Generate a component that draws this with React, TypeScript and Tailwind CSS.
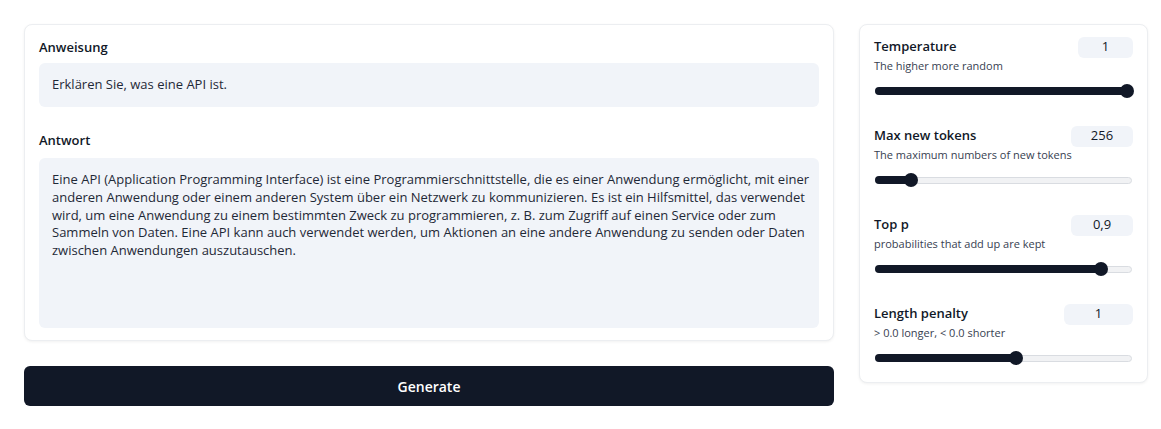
import React from "react";

const font = { fontFamily: '"Open Sans", "Noto Sans", sans-serif' };

function Slider({ pct }: { pct: number }) {
  return (
    <div className="relative h-4 mt-[10px] mx-[1px]">
      <div className="absolute left-0 right-0 top-[5px] h-[7px] rounded-full bg-[#f1f2f4] border border-[#d9dce1]" />
      <div
        className="absolute left-0 top-[4px] h-[8px] rounded-full bg-[#111827]"
        style={{ width: `${pct}%` }}
      />
      <div
        className="absolute top-[1px] w-[14px] h-[14px] rounded-full bg-[#111827] -translate-x-1/2"
        style={{ left: `${pct}%` }}
      />
    </div>
  );
}

function Param({
  title,
  desc,
  value,
  boxW,
  pct,
  last,
}: {
  title: string;
  desc: string;
  value: string;
  boxW: string;
  pct: number;
  last?: boolean;
}) {
  return (
    <div className={last ? "" : "mb-[27px]"}>
      <div className="flex items-center justify-between h-[20px]">
        <span className="text-[13px] font-semibold text-[#111827]">{title}</span>
        <div
          className={`${boxW} h-[21px] rounded-md bg-[#f1f4f9] flex items-center justify-center text-[13px] text-[#111827]`}
        >
          {value}
        </div>
      </div>
      <div className="mt-[2px] text-[11px] leading-[14px] text-[#374151]">{desc}</div>
      <Slider pct={pct} />
    </div>
  );
}

export default function App() {
  return (
    <div className="w-[1161px] h-[429px] bg-white pl-6 pt-6" style={font}>
      <div className="flex gap-[25px] items-start">
        <div className="w-[810px] flex flex-col">
          <div className="rounded-lg border border-[#eceef1] shadow-[0_1px_3px_rgba(0,0,0,0.06)] bg-white px-[14px] pt-[13px] pb-[12px]">
            <div className="text-[13px] leading-[18px] font-semibold text-[#111827] mb-[7px]">
              Anweisung
            </div>
            <div className="h-[44px] rounded-md bg-[#f1f4f9] px-[13px] flex items-center text-[13px] text-[#1f2937]">
              Erklären Sie, was eine API ist.
            </div>
            <div className="mt-[24px] text-[13px] leading-[18px] font-semibold text-[#111827] mb-[9px]">
              Antwort
            </div>
            <div className="h-[170px] rounded-md bg-[#f1f4f9] pl-[13px] pr-[4px] pt-[13px] text-[13px] leading-[17.75px] text-[#1f2937]">
              Eine API (Application Programming Interface) ist eine Programmierschnittstelle, die es einer Anwendung ermöglicht, mit einer anderen Anwendung oder einem anderen System über ein Netzwerk zu kommunizieren. Es ist ein Hilfsmittel, das verwendet wird, um eine Anwendung zu einem bestimmten Zweck zu programmieren, z. B. zum Zugriff auf einen Service oder zum Sammeln von Daten. Eine API kann auch verwendet werden, um Aktionen an eine andere Anwendung zu senden oder Daten zwischen Anwendungen auszutauschen.
            </div>
          </div>
          <button className="mt-[25px] h-[40px] rounded-md bg-[#111827] text-white text-[14px] font-semibold">
            Generate
          </button>
        </div>
        <div className="w-[289px] rounded-lg border border-[#eceef1] shadow-[0_1px_3px_rgba(0,0,0,0.06)] bg-white px-[14px] pt-[12px] pb-[16px]">
          <Param title="Temperature" desc="The higher more random" value="1" boxW="w-[55px]" pct={98} />
          <Param title="Max new tokens" desc="The maximum numbers of new tokens" value="256" boxW="w-[62px]" pct={14} />
          <Param title="Top p" desc="probabilities that add up are kept" value="0,9" boxW="w-[62px]" pct={88} />
          <Param title="Length penalty" desc="> 0.0 longer, < 0.0 shorter" value="1" boxW="w-[69px]" pct={55} last />
        </div>
      </div>
    </div>
  );
}
